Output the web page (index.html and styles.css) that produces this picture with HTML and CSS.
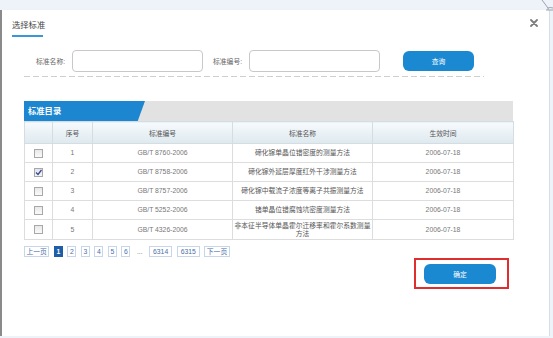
FILE: index.html
```html
<!DOCTYPE html>
<html lang="zh-CN">
<head>
<meta charset="utf-8">
<title>选择标准</title>
<link rel="stylesheet" href="styles.css">
</head>
<body>
<div class="topstrip">
  <svg class="fold" width="12" height="11" viewBox="0 0 12 11"><path d="M1 0 L7 8 L7 10 M5 10 L12 10 M7 8 Q9 7 12 8" fill="none" stroke="#9aa3ad" stroke-width="1"/></svg>
</div>
<div class="dialog">
  <div class="head">
    <div class="title">选择标准</div>
    <svg class="close" width="8" height="8" viewBox="0 0 8 8"><path d="M1 1 L7 7 M7 1 L1 7" stroke="#7d7d7d" stroke-width="1.8" stroke-linecap="round"/></svg>
  </div>
  <div class="search">
    <span class="lbl">标准名称:</span>
    <span class="inp"></span>
    <span class="lbl lbl2">标准编号:</span>
    <span class="inp"></span>
    <span class="btn btn-query">查询</span>
  </div>
  <div class="dash"></div>
  <div class="section">
    <div class="band"><div class="tab">标准目录</div></div>
    <table class="grid">
      <colgroup><col class="c1"><col class="c2"><col class="c3"><col class="c4"><col class="c5"></colgroup>
      <thead>
        <tr><th></th><th>序号</th><th>标准编号</th><th>标准名称</th><th>生效时间</th></tr>
      </thead>
      <tbody>
        <tr><td><span class="cb"></span></td><td>1</td><td>GB/T 8760-2006</td><td class="nm">碲化镓单晶位错密度的测量方法</td><td>2006-07-18</td></tr>
        <tr><td><span class="cb on"><svg width="7" height="7" viewBox="0 0 7 7"><path d="M1 3.5 L3 5.5 L6.5 1" fill="none" stroke="#3a4a8a" stroke-width="1.3"/></svg></span></td><td>2</td><td>GB/T 8758-2006</td><td class="nm">碲化镓外延层厚度红外干涉测量方法</td><td>2006-07-18</td></tr>
        <tr><td><span class="cb"></span></td><td>3</td><td>GB/T 8757-2006</td><td class="nm">碲化镓中载流子浓度等离子共振测量方法</td><td>2006-07-18</td></tr>
        <tr><td><span class="cb"></span></td><td>4</td><td>GB/T 5252-2006</td><td class="nm">锗单晶位错腐蚀坑密度测量方法</td><td>2006-07-18</td></tr>
        <tr class="tall"><td><span class="cb"></span></td><td>5</td><td>GB/T 4326-2006</td><td class="nm">非本征半导体单晶霍尔迁移率和霍尔系数测量方法</td><td>2006-07-18</td></tr>
      </tbody>
    </table>
    <div class="pager">
      <span class="pg">上一页</span>
      <span class="pg cur">1</span>
      <span class="pg">2</span>
      <span class="pg">3</span>
      <span class="pg">4</span>
      <span class="pg">5</span>
      <span class="pg">6</span>
      <span class="dots">...</span>
      <span class="pg wide">6314</span>
      <span class="pg wide">6315</span>
      <span class="pg">下一页</span>
    </div>
  </div>
  <div class="foot">
    <div class="mark"><span class="btn btn-ok">确定</span></div>
  </div>
</div>
</body>
</html>
```
FILE: styles.css
```css
html, body {
  margin: 0;
  padding: 0;
}
body {
  width: 553px;
  height: 338px;
  overflow: hidden;
  background: #eef3f9;
  font-family: "Liberation Sans", "Noto Sans CJK SC", sans-serif;
  color: #555;
}
.topstrip {
  height: 10px;
  display: flex;
  justify-content: flex-end;
}
.fold {
  display: block;
}
.dialog {
  width: 550px;
  height: 326px;
  box-sizing: border-box;
  background: #fff;
  border-left: 2px solid #8a8a8a;
  border-right: 1px solid #d5dfea;
}
.head {
  display: flex;
  justify-content: space-between;
  align-items: flex-start;
}
.title {
  margin-left: 10px;
  padding-top: 9px;
  padding-bottom: 4px;
  width: 31px;
  font-size: 8.3px;
  line-height: 12px;
  color: #444;
  white-space: nowrap;
  border-bottom: 2px solid #3a97d6;
}
.close {
  display: block;
  margin-top: 9px;
  margin-right: 11px;
}
.search {
  display: flex;
  align-items: center;
  margin-top: 13px;
  padding-left: 34px;
  height: 22px;
}
.lbl {
  font-size: 6.8px;
  color: #666;
  width: 36px;
}
.lbl2 {
  margin-left: 10px;
}
.inp {
  width: 131px;
  height: 22px;
  box-sizing: border-box;
  border: 1px solid #c8c8c8;
  border-radius: 4px;
}
.btn {
  display: flex;
  align-items: center;
  justify-content: center;
  background: #1b88d2;
  color: #fff;
  font-size: 6.8px;
  border-radius: 6px;
}
.btn-query {
  margin-left: 23px;
  width: 71px;
  height: 20px;
}
.dash {
  margin: 4px 0 0 22px;
  width: 460px;
  height: 1px;
  background: repeating-linear-gradient(to right, #cfcfcf 0 6px, transparent 6px 9px);
}
.section {
  margin: 24px 0 0 22px;
  width: 489px;
}
.band {
  height: 20px;
  background: #e2e2e2;
}
.tab {
  width: 121px;
  height: 20px;
  background: #1c87d0;
  clip-path: polygon(0 0, 100% 0, 94% 100%, 0 100%);
  color: #fff;
  font-weight: bold;
  font-size: 8.3px;
  line-height: 20px;
  padding-left: 4px;
  box-sizing: border-box;
}
.grid {
  width: 489px;
  border-collapse: collapse;
  table-layout: fixed;
  font-size: 6.8px;
}
.c1 { width: 28px; }
.c2 { width: 40px; }
.c3 { width: 140px; }
.c4 { width: 140px; }
.c5 { width: 141px; }
.grid th {
  height: 21px;
  font-weight: normal;
  color: #555;
  background: linear-gradient(#f6fafc, #dde9ef);
  border: 1px solid #d6dde2;
  padding: 0;
}
.grid td {
  height: 18px;
  padding: 0 1px;
  text-align: center;
  color: #777;
  border: 1px solid #dddddd;
  line-height: 8px;
}
.grid td.nm {
  color: #555;
}
.grid tr.tall td {
  height: 19px;
}
.cb {
  display: inline-block;
  vertical-align: middle;
  width: 7px;
  height: 7px;
  border: 1px solid #a8a8a8;
  background: linear-gradient(#e8e8e8, #fafafa);
}
.cb.on {
  background: linear-gradient(#dfe3f0, #f4f6fb);
}
.cb svg {
  display: block;
}
.pager {
  display: flex;
  align-items: center;
  gap: 4.5px;
  margin-top: 6px;
  height: 11px;
  font-size: 6.8px;
}
.pg {
  height: 11px;
  box-sizing: border-box;
  border: 1px solid #c7d6ea;
  padding: 0 1.5px;
  line-height: 9px;
  color: #4a6ea8;
  min-width: 9px;
  text-align: center;
}
.pg.wide {
  padding: 0 3px;
}
.pg.cur {
  background: #1e5ea8;
  border-color: #1e5ea8;
  color: #fff;
  font-weight: bold;
}
.dots {
  color: #777;
  padding: 0 2px;
}
.foot {
  display: flex;
  justify-content: flex-end;
  margin-top: 1px;
  padding-right: 40px;
}
.mark {
  border: 2px solid #e02d2d;
  padding: 4px 11px 3px 8px;
}
.btn-ok {
  width: 72px;
  height: 20px;
}
```
